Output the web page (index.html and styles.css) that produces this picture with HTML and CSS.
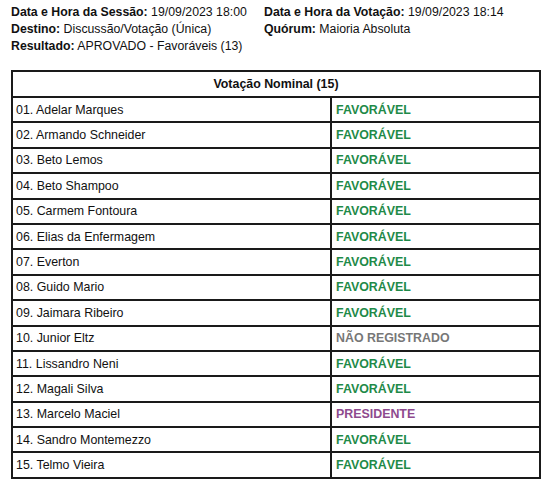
FILE: index.html
```html
<!DOCTYPE html>
<html>
<head>
<meta charset="utf-8">
<link rel="stylesheet" href="styles.css">
</head>
<body>
<div class="info">
  <div class="col">
    <div><b>Data e Hora da Sessão:</b> 19/09/2023 18:00</div>
    <div><b>Destino:</b> Discussão/Votação (Única)</div>
    <div><b>Resultado:</b> APROVADO - Favoráveis (13)</div>
  </div>
  <div class="col">
    <div><b>Data e Hora da Votação:</b> 19/09/2023 18:14</div>
    <div><b>Quórum:</b> Maioria Absoluta</div>
  </div>
</div>
<table class="votes">
  <tr><th colspan="2">Votação Nominal (15)</th></tr>
  <tr><td class="name">01. Adelar Marques</td><td class="fav">FAVORÁVEL</td></tr>
  <tr><td class="name">02. Armando Schneider</td><td class="fav">FAVORÁVEL</td></tr>
  <tr><td class="name">03. Beto Lemos</td><td class="fav">FAVORÁVEL</td></tr>
  <tr><td class="name">04. Beto Shampoo</td><td class="fav">FAVORÁVEL</td></tr>
  <tr><td class="name">05. Carmem Fontoura</td><td class="fav">FAVORÁVEL</td></tr>
  <tr><td class="name">06. Elias da Enfermagem</td><td class="fav">FAVORÁVEL</td></tr>
  <tr><td class="name">07. Everton</td><td class="fav">FAVORÁVEL</td></tr>
  <tr><td class="name">08. Guido Mario</td><td class="fav">FAVORÁVEL</td></tr>
  <tr><td class="name">09. Jaimara Ribeiro</td><td class="fav">FAVORÁVEL</td></tr>
  <tr><td class="name">10. Junior Eltz</td><td class="nr">NÃO REGISTRADO</td></tr>
  <tr><td class="name">11. Lissandro Neni</td><td class="fav">FAVORÁVEL</td></tr>
  <tr><td class="name">12. Magali Silva</td><td class="fav">FAVORÁVEL</td></tr>
  <tr><td class="name">13. Marcelo Maciel</td><td class="pres">PRESIDENTE</td></tr>
  <tr><td class="name">14. Sandro Montemezzo</td><td class="fav">FAVORÁVEL</td></tr>
  <tr><td class="name">15. Telmo Vieira</td><td class="fav">FAVORÁVEL</td></tr>
</table>
</body>
</html>
```
FILE: styles.css
```css
html, body {
  margin: 0;
  padding: 0;
  background: #fff;
}
body {
  font-family: "Liberation Sans", Arial, sans-serif;
  font-size: 12.3px;
  color: #111;
  padding: 4px 0 0 11px;
}
.info {
  display: flex;
  line-height: 17px;
}
.info .col:first-child {
  width: 253px;
}
.votes {
  margin-top: 15px;
  border-collapse: collapse;
  width: 530px;
  border: 2px solid #1a1a1a;
  font-size: 12.4px;
}
.votes th {
  height: 24px;
  font-weight: bold;
  text-align: center;
  border: 2px solid #1a1a1a;
  padding: 0;
}
.votes td {
  height: 23.4px;
  border: 2px solid #1a1a1a;
  padding: 0 0 0 3px;
}
.votes td.name {
  width: 314px;
}
.votes td.fav, .votes td.nr, .votes td.pres {
  font-weight: bold;
  padding-left: 4px;
}
.fav { color: #1e8a48; }
.nr { color: #777; }
.pres { color: #8e4a8e; }
```
